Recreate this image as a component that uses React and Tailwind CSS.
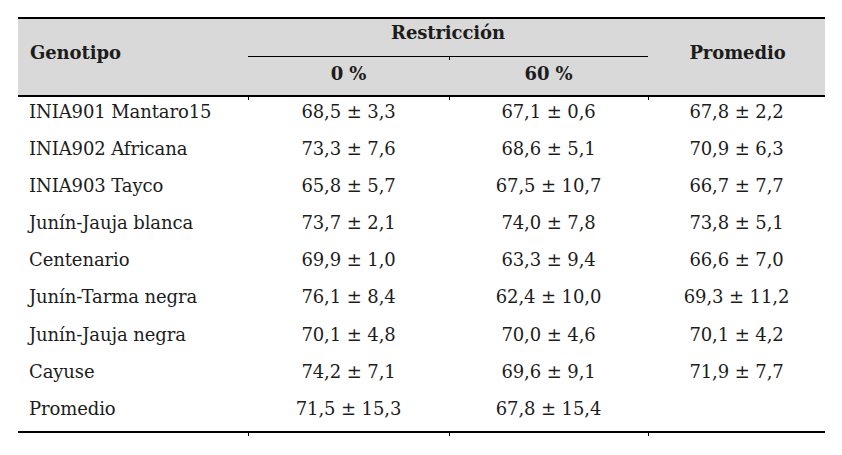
import React from 'react';

const rows = [
  ['INIA901 Mantaro15', '68,5 ± 3,3', '67,1 ± 0,6', '67,8 ± 2,2'],
  ['INIA902 Africana', '73,3 ± 7,6', '68,6 ± 5,1', '70,9 ± 6,3'],
  ['INIA903 Tayco', '65,8 ± 5,7', '67,5 ± 10,7', '66,7 ± 7,7'],
  ['Junín-Jauja blanca', '73,7 ± 2,1', '74,0 ± 7,8', '73,8 ± 5,1'],
  ['Centenario', '69,9 ± 1,0', '63,3 ± 9,4', '66,6 ± 7,0'],
  ['Junín-Tarma negra', '76,1 ± 8,4', '62,4 ± 10,0', '69,3 ± 11,2'],
  ['Junín-Jauja negra', '70,1 ± 4,8', '70,0 ± 4,6', '70,1 ± 4,2'],
  ['Cayuse', '74,2 ± 7,1', '69,6 ± 9,1', '71,9 ± 7,7'],
  ['Promedio', '71,5 ± 15,3', '67,8 ± 15,4', ''],
];

const Tick = ({ className }) => (
  <div className={`absolute w-px h-[3px] bg-black ${className}`}></div>
);

const App = () => {
  return (
    <div className="w-[842px] h-[455px] bg-white pt-[17px] pl-[18px] font-['DejaVu_Serif',serif] text-[18px] tracking-[-0.1px] leading-[24px] text-[#1c1c1c]">
      <div className="relative w-[807px]">
        {/* header */}
        <div className="grid grid-cols-[230px_201px_199px_177px] grid-rows-[38px_38px] bg-[#d9d9d9] border-t-2 border-b-2 border-black font-bold">
          <div className="row-span-2 pl-[12px] pt-[22px]">Genotipo</div>
          <div className="col-span-2 text-center pt-[2px] border-b border-black">Restricción</div>
          <div className="row-span-2 text-center pt-[22px] pl-[2px]">Promedio</div>
          <div className="text-center pt-[5px]">0 %</div>
          <div className="text-center pt-[5px]">60 %</div>
        </div>
        {/* body */}
        <div className="border-b-2 border-black">
          {rows.map((r) => (
            <div key={r[0]} className="grid grid-cols-[230px_201px_199px_177px] h-[37.1px] pt-[3px]">
              <div className="pl-[11px]">{r[0]}</div>
              <div className="text-center">{r[1]}</div>
              <div className="text-center">{r[2]}</div>
              <div className="text-center">{r[3]}</div>
            </div>
          ))}
        </div>
        <Tick className="left-[230px] top-[80px]" />
        <Tick className="left-[431px] top-[80px]" />
        <Tick className="left-[630px] top-[80px]" />
        <Tick className="left-[431px] top-[40px]" />
        <Tick className="left-[230px] bottom-[-3px]" />
        <Tick className="left-[431px] bottom-[-3px]" />
        <Tick className="left-[630px] bottom-[-3px]" />
      </div>
    </div>
  );
};

export default App;
